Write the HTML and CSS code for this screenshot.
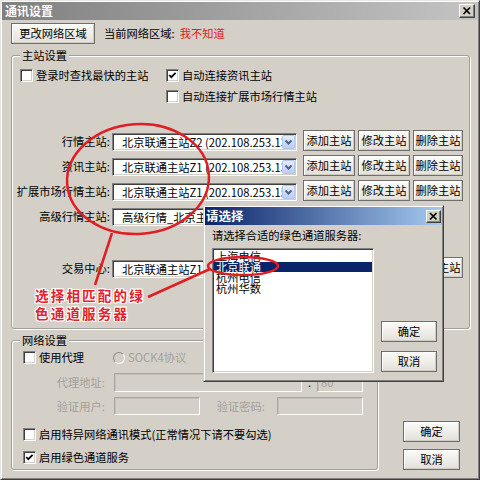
FILE: index.html
```html
<!DOCTYPE html>
<html lang="zh-CN">
<head>
<meta charset="utf-8">
<title>通讯设置</title>
<link rel="stylesheet" href="styles.css">
</head>
<body>
<div class="win">
  <div class="titlebar">
    <span class="title">通讯设置</span>
    <span class="xbtn"><svg width="14" height="12" viewBox="0 0 14 12"><path d="M3.5 2.5 L10 9 M10 2.5 L3.5 9" stroke="#000" stroke-width="1.7" fill="none"/></svg></span>
  </div>
  <div class="content">
    <div class="toprow">
      <div class="b b-area">更改网络区域</div>
      <span class="curlabel">当前网络区域:</span>
      <span class="red">我不知道</span>
    </div>

    <div class="group g1">
      <span class="legend">主站设置</span>
      <div class="checks">
        <div class="chkrow">
          <div class="chk col1"><span class="chkbox"></span><span>登录时查找最快的主站</span></div>
          <div class="chk"><span class="chkbox"><svg width="11" height="11" viewBox="0 0 11 11"><path d="M2.2 5 L4.3 7.2 L8.6 2.9" stroke="#000" stroke-width="1.7" fill="none"/></svg></span><span>自动连接资讯主站</span></div>
        </div>
        <div class="chkrow row2">
          <div class="chk"><span class="chkbox"></span><span>自动连接扩展市场行情主站</span></div>
        </div>
      </div>

      <div class="srows">
        <div class="srow">
          <span class="slabel">行情主站:</span>
          <div class="combo"><span class="ctext">北京联通主站Z2 (202.108.253.13:7709)</span><span class="dd"><svg width="11" height="12" viewBox="0 0 11 12"><path d="M2.5 4.5 L5.5 7.5 L8.5 4.5" stroke="#4d6185" stroke-width="2" fill="none"/></svg></span></div>
          <div class="b sbtn first">添加主站</div><div class="b sbtn">修改主站</div><div class="b sbtn last">删除主站</div>
        </div>
        <div class="srow">
          <span class="slabel">资讯主站:</span>
          <div class="combo"><span class="ctext">北京联通主站Z1 (202.108.253.13:7615)</span><span class="dd"><svg width="11" height="12" viewBox="0 0 11 12"><path d="M2.5 4.5 L5.5 7.5 L8.5 4.5" stroke="#4d6185" stroke-width="2" fill="none"/></svg></span></div>
          <div class="b sbtn first">添加主站</div><div class="b sbtn">修改主站</div><div class="b sbtn last">删除主站</div>
        </div>
        <div class="srow">
          <span class="slabel">扩展市场行情主站:</span>
          <div class="combo"><span class="ctext">北京联通主站Z1 (202.108.253.154:7721)</span><span class="dd"><svg width="11" height="12" viewBox="0 0 11 12"><path d="M2.5 4.5 L5.5 7.5 L8.5 4.5" stroke="#4d6185" stroke-width="2" fill="none"/></svg></span></div>
          <div class="b sbtn first">添加主站</div><div class="b sbtn">修改主站</div><div class="b sbtn last">删除主站</div>
        </div>
        <div class="srow">
          <span class="slabel">高级行情主站:</span>
          <div class="combo"><span class="ctext">高级行情_北京主站</span><span class="dd"><svg width="11" height="12" viewBox="0 0 11 12"><path d="M2.5 4.5 L5.5 7.5 L8.5 4.5" stroke="#4d6185" stroke-width="2" fill="none"/></svg></span></div>
        </div>
        <div class="srow trade">
          <span class="slabel">交易中心:</span>
          <div class="combo"><span class="ctext">北京联通主站Z1 (202.108.253.154:7708)</span><span class="dd"><svg width="11" height="12" viewBox="0 0 11 12"><path d="M2.5 4.5 L5.5 7.5 L8.5 4.5" stroke="#4d6185" stroke-width="2" fill="none"/></svg></span></div>
          <div class="b sbtn first">添加主站</div><div class="b sbtn">修改主站</div><div class="b sbtn last">删除主站</div>
        </div>
      </div>
    </div>

    <div class="lower">
      <div class="group g2">
        <span class="legend">网络设置</span>
        <div class="nrow">
          <div class="chk proxy"><span class="chkbox"></span><span>使用代理</span></div>
          <span class="radio"></span><span class="gray rlabel">SOCK4协议</span>
        </div>
        <div class="frow addr">
          <span class="flabel gray">代理地址:</span>
          <span class="inp w188"></span>
          <span class="dot">.</span>
          <span class="inp w46"><span class="gray">80</span></span>
        </div>
        <div class="frow user">
          <span class="flabel gray">验证用户:</span>
          <span class="inp w86"></span>
          <span class="flabel2 gray">验证密码:</span>
          <span class="inp w86"></span>
        </div>
        <div class="nrow special">
          <div class="chk"><span class="chkbox"></span><span>启用特异网络通讯模式(正常情况下请不要勾选)</span></div>
        </div>
        <div class="nrow green">
          <div class="chk"><span class="chkbox"><svg width="11" height="11" viewBox="0 0 11 11"><path d="M2.2 5 L4.3 7.2 L8.6 2.9" stroke="#000" stroke-width="1.7" fill="none"/></svg></span><span>启用绿色通道服务</span></div>
        </div>
      </div>
      <div class="okcol">
        <div class="b okbtn">确定</div>
        <div class="b okbtn">取消</div>
      </div>
    </div>
  </div>

  <div class="dialog">
    <div class="dtitle">
      <span class="title">请选择</span>
      <span class="xbtn dx"><svg width="13" height="11" viewBox="0 0 13 11"><path d="M3 2 L9.5 8.5 M9.5 2 L3 8.5" stroke="#000" stroke-width="1.7" fill="none"/></svg></span>
    </div>
    <div class="dbody">
      <div class="dlabel">请选择合适的绿色通道服务器:</div>
      <div class="drow">
        <div class="list">
          <div class="item">上海电信</div>
          <div class="item sel">北京联通</div>
          <div class="item">杭州电信</div>
          <div class="item">杭州华数</div>
        </div>
        <div class="dbtns">
          <div class="b dbtn">确定</div>
          <div class="b dbtn">取消</div>
        </div>
      </div>
    </div>
  </div>

  <svg class="annot" width="480" height="480" viewBox="0 0 480 480">
    <ellipse cx="138" cy="179" rx="71" ry="55" transform="rotate(-4 138 179)" fill="none" stroke="#e01e24" stroke-width="2.5"/>
    <line x1="112" y1="233" x2="95" y2="285" stroke="#e01e24" stroke-width="2.5"/>
    <line x1="148" y1="297" x2="210" y2="269" stroke="#e01e24" stroke-width="2.5"/>
    <ellipse cx="243" cy="266" rx="35" ry="9" fill="none" stroke="#e01e24" stroke-width="2.5"/>
  </svg>
  <div class="note">选择相匹配的绿<br>色通道服务器</div>
</div>
</body>
</html>
```

FILE: styles.css
```css
* { box-sizing: border-box; margin: 0; padding: 0; }

html, body { width: 480px; height: 480px; overflow: hidden; }

body {
  font-family: "Noto Sans CJK SC", "Liberation Sans", sans-serif;
  font-size: 11.25px;
  line-height: 13px;
  color: #000;
  background: #d4d0c8;
}

.win {
  position: relative;
  width: 480px;
  height: 480px;
  background: #d4d0c8;
  border: 1px solid;
  border-color: #e8e6e1 #404040 #404040 #e8e6e1;
  box-shadow: inset 1px 1px #fff, inset -1px -1px #808080;
  padding: 1px;
}

.titlebar {
  height: 18px;
  display: flex;
  align-items: center;
  justify-content: space-between;
  background: linear-gradient(to right, #808080, #c4c4c4);
  padding: 0 3px 0 3px;
}

.title {
  color: #fff;
  font-weight: bold;
  font-size: 12px;
  line-height: 14px;
}

.xbtn {
  width: 16px;
  height: 14px;
  display: flex;
  align-items: center;
  justify-content: center;
  background: #d4d0c8;
  border: 1px solid;
  border-color: #fff #404040 #404040 #fff;
  box-shadow: inset -1px -1px #808080;
}

.content { padding: 3px 8px 0 9px; }

.b {
  display: flex;
  align-items: center;
  justify-content: center;
  height: 21px;
  background: linear-gradient(#fbfbf9, #e3e0d8);
  border: 1px solid #6e6e6e;
  box-shadow: inset 1px 1px #fff, inset -1px -1px #cfccc4;
  white-space: nowrap;
}

.toprow { display: flex; align-items: center; height: 21px; }
.b-area { width: 84px; }
.curlabel { margin-left: 9px; }
.red { color: #e0201c; margin-left: 5px; }

.group {
  position: relative;
  border: 1px solid #a29f97;
  border-radius: 3px;
  box-shadow: inset 1px 1px #fff, 1px 1px #fff;
}

.legend {
  position: absolute;
  top: -7px;
  left: 8px;
  padding: 0 2px;
  background: #d4d0c8;
  line-height: 13px;
}

.g1 { margin-top: 11px; height: 274px; padding-top: 13px; }

.checks { padding-left: 8px; }
.chkrow { display: flex; align-items: center; height: 13px; }
.row2 { margin-top: 8px; padding-left: 146px; }
.col1 { width: 146px; }

.chk { display: flex; align-items: center; gap: 3px; white-space: nowrap; }

.chkbox {
  width: 13px;
  height: 13px;
  flex: none;
  background: #fff;
  border: 1px solid;
  border-color: #808080 #fff #fff #808080;
  box-shadow: inset 1px 1px #404040, inset -1px -1px #d4d0c8;
  display: flex;
  align-items: center;
  justify-content: center;
}

.srows { margin-top: 27px; display: flex; flex-direction: column; gap: 4px; }
.srow { display: flex; align-items: flex-end; height: 21px; }
.srow.trade { margin-top: 27px; }

.slabel {
  width: 100px;
  padding-right: 2px;
  text-align: right;
  white-space: nowrap;
  align-self: center;
  margin-top: 2px;
}

.combo {
  width: 185px;
  height: 18px;
  display: flex;
  align-items: center;
  background: #fff;
  border: 1px solid;
  border-color: #808080 #fff #fff #808080;
  box-shadow: inset 1px 1px #404040, inset -1px -1px #d4d0c8;
  padding: 1px 1px 1px 1px;
}

.ctext {
  flex: 1;
  overflow: hidden;
  white-space: nowrap;
  padding-left: 8px;
  line-height: 14px;
}

.dd {
  width: 13px;
  height: 14px;
  flex: none;
  display: flex;
  align-items: center;
  justify-content: center;
  background: linear-gradient(#e6eefc, #b9cdf7);
  border: 1px solid #b3c6ee;
  border-radius: 2px;
}

.sbtn { width: 52px; margin-left: 3px; }
.sbtn.first { margin-left: 6px; }
.sbtn.last { width: 50px; }

.lower { display: flex; align-items: flex-end; margin-top: 11px; }

.g2 { width: 367px; height: 130px; padding-top: 10px; }

.nrow { display: flex; align-items: center; height: 13px; padding-left: 11px; }
.proxy { width: 90px; }
.special { margin-top: 13px; }
.green { margin-top: 10px; }

.gray { color: #a4a19a; }

.radio {
  width: 12px;
  height: 12px;
  flex: none;
  border-radius: 50%;
  border: 1px solid;
  border-color: #8d8b86 #fff #fff #8d8b86;
  background: #d4d0c8;
}
.rlabel { margin-left: 3px; white-space: nowrap; }

.frow { display: flex; align-items: center; }
.addr { margin-top: 9px; height: 19px; }
.user { margin-top: 5px; height: 18px; }

.flabel { width: 102px; padding-right: 9px; text-align: right; white-space: nowrap; }
.flabel2 { width: 77px; padding-right: 12px; text-align: right; white-space: nowrap; }

.inp {
  height: 100%;
  display: flex;
  align-items: center;
  padding-left: 3px;
  border: 1px solid;
  border-color: #a9a69f #fff #fff #a9a69f;
  box-shadow: inset 1px 1px #c4c1ba;
}
.w188 { width: 188px; }
.w46 { width: 46px; }
.w86 { width: 86px; }
.dot { width: 15px; text-align: center; }

.okcol { display: flex; flex-direction: column; gap: 7px; margin-left: 25px; }
.okbtn { width: 57px; }

.dialog {
  position: absolute;
  left: 202px;
  top: 204px;
  width: 241px;
  height: 177px;
  background: #d4d0c8;
  border: 1px solid;
  border-color: #d4d0c8 #404040 #404040 #d4d0c8;
  box-shadow: inset 1px 1px #fff, inset -1px -1px #808080;
  padding: 1px;
}

.dtitle {
  height: 18px;
  display: flex;
  align-items: center;
  justify-content: space-between;
  background: linear-gradient(to right, #0a246a, #a6caf0);
  padding: 0 1px 0 1px;
}

.dtitle .title { font-size: 12.5px; }
.dx { width: 15px; height: 13px; }

.dbody { padding: 4px 0 0 7px; }
.dlabel { line-height: 13px; white-space: nowrap; }
.drow { display: flex; margin-top: 6px; }

.list {
  width: 162px;
  height: 125px;
  background: #fff;
  border: 1px solid;
  border-color: #808080 #fff #fff #808080;
  box-shadow: inset 1px 1px #404040, inset -1px -1px #d4d0c8;
  padding: 2px 1px 0 1px;
}

.item { height: 10.5px; line-height: 10.5px; padding-left: 2px; white-space: nowrap; }
.item.sel { background: #0a246a; color: #fff; }

.dbtns {
  display: flex;
  flex-direction: column;
  gap: 9px;
  margin-left: 7px;
  align-self: flex-end;
  margin-bottom: 1px;
}
.dbtn { width: 56px; }

.annot {
  position: absolute;
  left: -1px;
  top: -1px;
  pointer-events: none;
}

.note {
  position: absolute;
  left: 34px;
  top: 285px;
  font-size: 13.5px;
  line-height: 18px;
  font-weight: bold;
  letter-spacing: 2.2px;
  color: #e3222b;
  white-space: nowrap;
  text-shadow: 1px 0 #fff, -1px 0 #fff, 0 1px #fff, 0 -1px #fff, 1px 1px #fff, -1px -1px #fff, 1px -1px #fff, -1px 1px #fff;
}
```
